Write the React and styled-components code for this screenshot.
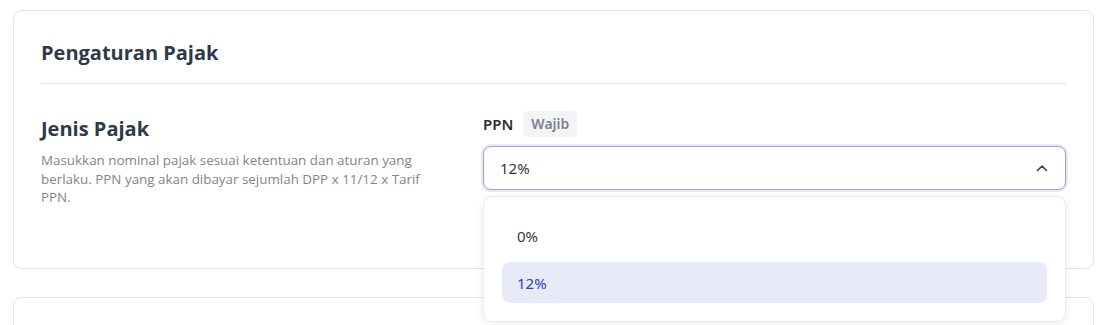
import React from "react";
import styled, { createGlobalStyle } from "styled-components";

const Global = createGlobalStyle`
  html, body { margin: 0; padding: 0; background: #ffffff; }
  body { font-family: "Open Sans", "Noto Sans", sans-serif; }
  * { box-sizing: border-box; }
`;

const Page = styled.div`
  padding: 10px 5px 0 13px;
  display: flex;
  flex-direction: column;
  gap: 28px;
  height: 325px;
  overflow: hidden;
`;

const Card = styled.section`
  border: 1px solid #e3e3e6;
  border-radius: 8px;
  background: #fff;
  padding: ${(p) => (p.$empty ? "0" : "27px 27px 61px")};
  min-height: ${(p) => (p.$empty ? "120px" : "auto")};
  flex-shrink: 0;
`;

const CardTitle = styled.h2`
  margin: 0;
  font-family: "Open Sans", sans-serif;
  font-weight: 700;
  font-size: 20px;
  line-height: 30px;
  color: #2d3a4b;
  padding-bottom: 15px;
  border-bottom: 1px solid #e3e3e6;
`;

const Row = styled.div`
  display: grid;
  grid-template-columns: 410px 1fr;
  column-gap: 32px;
  padding-top: 27px;
`;

const InfoCol = styled.div`
  display: flex;
  flex-direction: column;
  gap: 8px;
  padding-top: 4px;
`;

const FieldTitle = styled.h3`
  margin: 0;
  font-family: "Open Sans", sans-serif;
  font-weight: 700;
  font-size: 20px;
  line-height: 28px;
  color: #2d3a4b;
`;

const Description = styled.p`
  margin: 0;
  max-width: 400px;
  font-family: "Open Sans", sans-serif;
  font-size: 13.4px;
  line-height: 18.5px;
  color: #80858f;
`;

const FieldCol = styled.div`
  display: flex;
  flex-direction: column;
  gap: 9px;
`;

const LabelRow = styled.div`
  display: flex;
  align-items: center;
  gap: 10px;
`;

const Label = styled.span`
  font-family: "Noto Sans", sans-serif;
  font-weight: 600;
  font-size: 15px;
  color: #2b2f36;
`;

const Badge = styled.span`
  font-family: "Noto Sans", sans-serif;
  font-weight: 600;
  font-size: 14px;
  line-height: 26px;
  padding: 0 8px;
  border-radius: 4px;
  background: #f3f4f6;
  color: #7b8190;
`;

const SelectWrap = styled.div`
  position: relative;
`;

const SelectBox = styled.button`
  width: 100%;
  height: 44px;
  display: flex;
  align-items: center;
  justify-content: space-between;
  padding: 0 17px 0 16px;
  border: 1px solid #a2a8b8;
  border-radius: 8px;
  background: #fff;
  box-shadow: 0 0 0 2px #e6eaf8;
  font-family: "Noto Sans", sans-serif;
  font-size: 15px;
  color: #3b3535;
  cursor: pointer;
`;

const Menu = styled.ul`
  position: absolute;
  left: 0;
  right: 0;
  top: 50px;
  margin: 0;
  list-style: none;
  padding: 18px;
  background: #fff;
  border: 1px solid #ececef;
  border-radius: 9px;
  box-shadow: 0 2px 8px rgba(20, 25, 40, 0.08);
  display: flex;
  flex-direction: column;
  gap: 6px;
  z-index: 2;
`;

const Option = styled.li`
  height: 41px;
  display: flex;
  align-items: center;
  padding: 0 15px;
  border-radius: 8px;
  font-family: "Noto Sans", sans-serif;
  font-size: 15px;
  color: ${(p) => (p.$active ? "#2d41b8" : "#343a46")};
  background: ${(p) => (p.$active ? "#e8eaf7" : "transparent")};
`;

const Chevron = () => (
  <svg width="12" height="8" viewBox="0 0 12 8" fill="none">
    <path d="M1.5 6.5L6 2L10.5 6.5" stroke="#374151" strokeWidth="1.6" strokeLinecap="round" strokeLinejoin="round" />
  </svg>
);

export default function App() {
  return (
    <>
      <Global />
      <Page>
        <Card>
          <CardTitle>Pengaturan Pajak</CardTitle>
          <Row>
            <InfoCol>
              <FieldTitle>Jenis Pajak</FieldTitle>
              <Description>
                Masukkan nominal pajak sesuai ketentuan dan aturan yang berlaku. PPN yang akan dibayar sejumlah DPP x 11/12 x Tarif PPN.
              </Description>
            </InfoCol>
            <FieldCol>
              <LabelRow>
                <Label>PPN</Label>
                <Badge>Wajib</Badge>
              </LabelRow>
              <SelectWrap>
                <SelectBox type="button">
                  <span>12%</span>
                  <Chevron />
                </SelectBox>
                <Menu>
                  <Option>0%</Option>
                  <Option $active>12%</Option>
                </Menu>
              </SelectWrap>
            </FieldCol>
          </Row>
        </Card>
        <Card $empty />
      </Page>
    </>
  );
}
